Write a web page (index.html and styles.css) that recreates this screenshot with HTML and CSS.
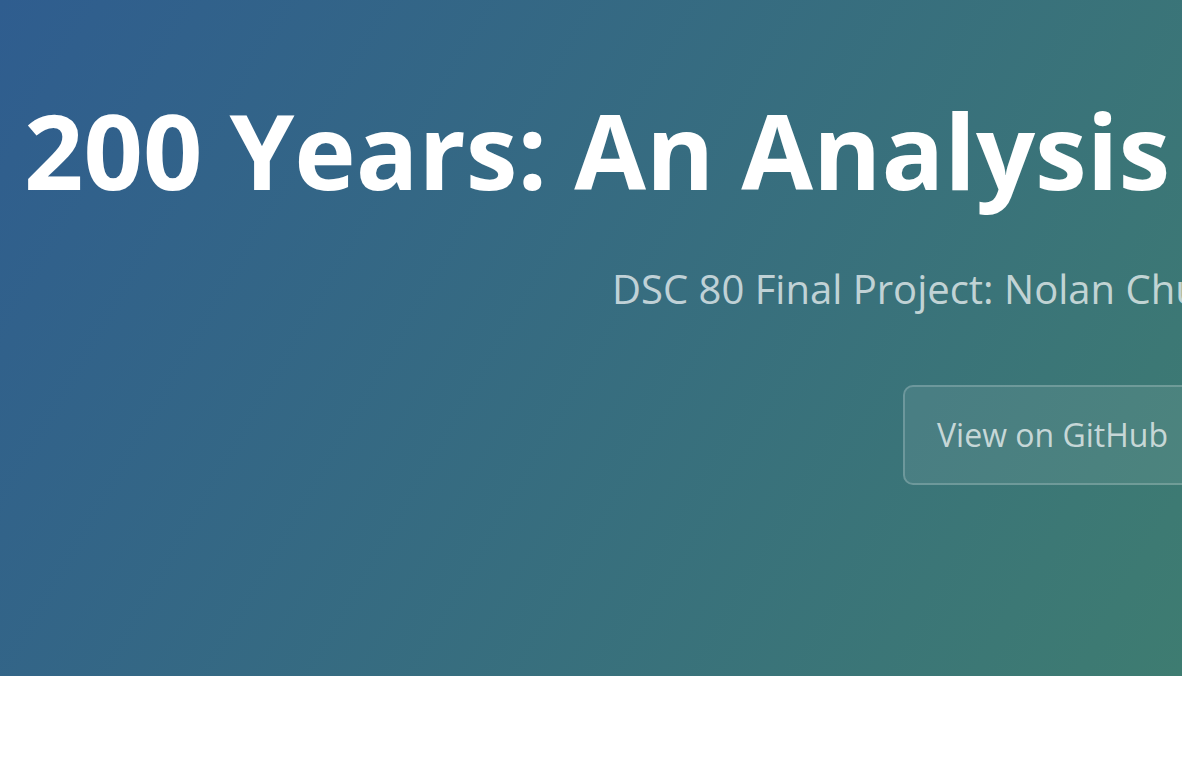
FILE: index.html
```html
<!DOCTYPE html>
<html lang="en">
<head>
<meta charset="utf-8">
<title>200 Years: An Analysis</title>
<link rel="stylesheet" href="styles.css">
</head>
<body>
<header class="page-header">
  <h1 class="project-name">200 Years: An Analysis</h1>
  <h2 class="project-tagline">DSC 80 Final Project: Nolan Chu</h2>
  <div class="actions"><a class="btn" href="#">View on GitHub</a></div>
</header>
<main class="main-content"></main>
</body>
</html>
```
FILE: styles.css
```css
html, body {
  margin: 0;
  padding: 0;
  background: #fff;
}
body {
  font-family: "Open Sans", "DejaVu Sans", sans-serif;
  overflow: hidden;
}
.page-header {
  height: 676px;
  box-sizing: border-box;
  padding-top: 79px;
  overflow: hidden;
  white-space: nowrap;
  background-color: #3a7478;
  background-image: linear-gradient(120deg, #2f5d8f 0%, #3e7c71 100%);
  color: #fff;
}
.project-name {
  margin: 0;
  padding-left: 24px;
  font-size: 104px;
  font-weight: 700;
  line-height: 1.362;
}
.project-tagline {
  margin: 41px 0 0;
  padding-left: 612px;
  font-size: 40px;
  font-weight: 400;
  line-height: 1.362;
  color: rgba(255, 255, 255, 0.7);
}
.actions {
  margin-top: 69px;
  padding-left: 903px;
}
.btn {
  display: inline-block;
  padding: 24px 32px;
  font-size: 32px;
  line-height: 1.5;
  color: rgba(255, 255, 255, 0.7);
  text-decoration: none;
  background-color: rgba(255, 255, 255, 0.08);
  border: 2px solid rgba(255, 255, 255, 0.2);
  border-radius: 10px;
}
```
